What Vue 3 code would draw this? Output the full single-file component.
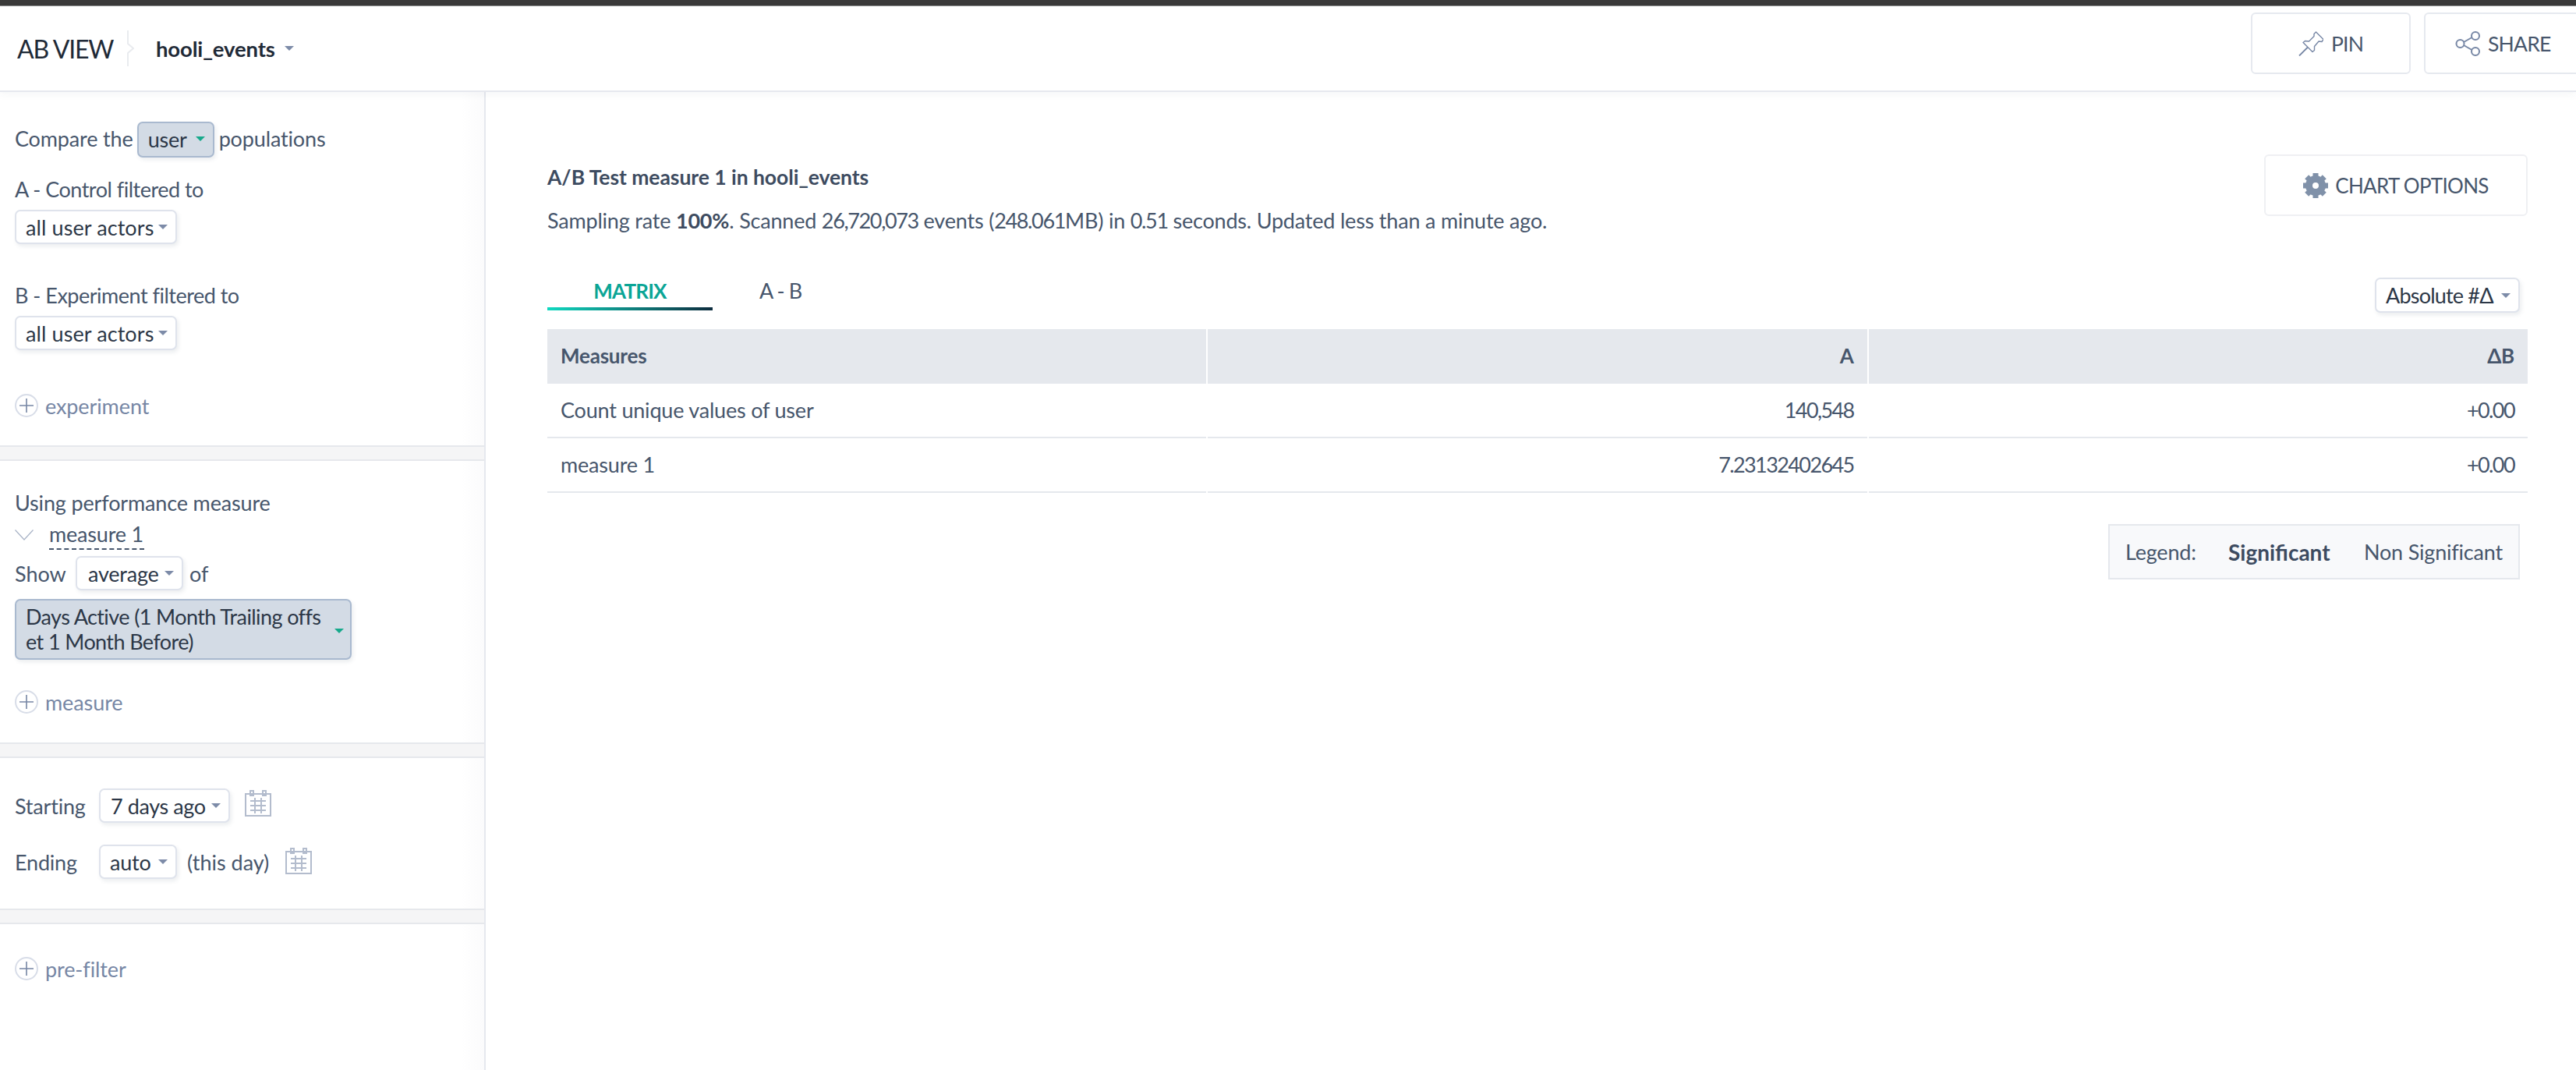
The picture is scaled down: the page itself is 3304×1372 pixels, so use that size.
<script setup>
const rows = [
  { name: 'Count unique values of user', a: '140,548', b: '+0.00' },
  { name: 'measure 1', a: '7.23132402645', b: '+0.00' }
]
const teeth = [0, 45, 90, 135, 180, 225, 270, 315]
</script>

<template>
  <div class="page">
    <div class="topline"></div>
    <header class="header">
      <div class="brand">AB VIEW</div>
      <svg class="crumb" width="9" height="46" viewBox="0 0 9 46"><path d="M1 0V17L8 23L1 29V46" fill="none" stroke="#e9ebef" stroke-width="2"/></svg>
      <div class="source">hooli_events<i class="caret"></i></div>
      <div class="head-actions">
        <button class="head-btn">
          <svg width="32" height="32" viewBox="0 0 32 32" fill="none" stroke="#7787a5" stroke-width="1.4" stroke-linejoin="round"><path d="M22.5 1L32 10.5L30 13.5L26 13L20.5 19.5L20.5 24.5L18 26.5L6 14.5L8.5 12.5L13.5 13L20 6.5L20 3.5Z"/><path d="M12 20.5L1 31.5" stroke-width="1.8"/></svg>
          <span>PIN</span>
        </button>
        <button class="head-btn share">
          <svg width="32" height="32" viewBox="0 0 32 32" fill="none" stroke="#7787a5" stroke-width="2"><circle cx="6.5" cy="16" r="5"/><circle cx="26" cy="6" r="5"/><circle cx="26" cy="26" r="5"/><path d="M11 14L21.5 8M11 18L21.5 24"/></svg>
          <span>SHARE</span>
        </button>
      </div>
    </header>

    <div class="body">
      <aside class="side">
        <section class="sec sec1">
          <div class="row compare">
            <span>Compare the</span>
            <div class="dd active user-dd">user<i class="caret green"></i></div>
            <span>populations</span>
          </div>
          <div class="label a-label">A - Control filtered to</div>
          <div class="row under"><div class="dd wide-dd">all user actors<i class="caret"></i></div></div>
          <div class="label b-label">B - Experiment filtered to</div>
          <div class="row under"><div class="dd wide-dd">all user actors<i class="caret"></i></div></div>
          <div class="add exp">
            <svg class="plus" width="30" height="30" viewBox="0 0 30 30" fill="none"><circle cx="15" cy="15" r="14" stroke="#d8dde8" stroke-width="2"/><path d="M15 6V24M6 15H24" stroke="#7787a5" stroke-width="1.6"/></svg>
            <span>experiment</span>
          </div>
        </section>
        <div class="divider"></div>

        <section class="sec sec2">
          <div class="label perf">Using performance measure</div>
          <div class="measure-row">
            <svg width="24" height="14" viewBox="0 0 24 14" fill="none"><path d="M0.5 0.5L12 13L23.5 0.5" stroke="#a9b3c6" stroke-width="1.2"/></svg>
            <span class="measure-name">measure 1</span>
          </div>
          <div class="row show-row">
            <span>Show</span>
            <div class="dd avg-dd">average<i class="caret"></i></div>
            <span>of</span>
          </div>
          <div class="dd active days-dd">
            <span class="days-text">Days Active (1 Month Trailing offs<br>et 1 Month Before)</span>
            <i class="caret green"></i>
          </div>
          <div class="add meas">
            <svg class="plus" width="30" height="30" viewBox="0 0 30 30" fill="none"><circle cx="15" cy="15" r="14" stroke="#d8dde8" stroke-width="2"/><path d="M15 6V24M6 15H24" stroke="#7787a5" stroke-width="1.6"/></svg>
            <span>measure</span>
          </div>
        </section>
        <div class="divider"></div>

        <section class="sec sec3">
          <div class="row date-row">
            <span class="date-label">Starting</span>
            <div class="dd start-dd">7 days ago<i class="caret"></i></div>
            <svg class="cal" width="34" height="34" viewBox="0 0 34 34" fill="none" stroke="#b3bccd" stroke-width="2"><rect x="1" y="5" width="32" height="28"/><rect x="7" y="1" width="4" height="6"/><rect x="23" y="1" width="4" height="6"/><path d="M7 14H27M7 20H27M7 26H27M13 10V30M21 10V30"/></svg>
          </div>
          <div class="row date-row second">
            <span class="date-label">Ending</span>
            <div class="dd end-dd">auto<i class="caret"></i></div>
            <span class="this-day">(this day)</span>
            <svg class="cal" width="34" height="34" viewBox="0 0 34 34" fill="none" stroke="#b3bccd" stroke-width="2"><rect x="1" y="5" width="32" height="28"/><rect x="7" y="1" width="4" height="6"/><rect x="23" y="1" width="4" height="6"/><path d="M7 14H27M7 20H27M7 26H27M13 10V30M21 10V30"/></svg>
          </div>
        </section>
        <div class="divider"></div>

        <section class="sec sec4">
          <div class="add">
            <svg class="plus" width="30" height="30" viewBox="0 0 30 30" fill="none"><circle cx="15" cy="15" r="14" stroke="#d8dde8" stroke-width="2"/><path d="M15 6V24M6 15H24" stroke="#7787a5" stroke-width="1.6"/></svg>
            <span>pre-filter</span>
          </div>
        </section>
      </aside>

      <main class="main">
        <div class="title-row">
          <div class="titles">
            <div class="title">A/B Test measure 1 in hooli_events</div>
            <div class="sub">Sampling rate <b>100%</b>. Scanned <span class="num">26,720,073</span> events (<span class="num">248.061</span>MB) in <span class="num">0.51</span> seconds. Updated less than a minute ago.</div>
          </div>
          <button class="chart-btn">
            <svg width="32" height="32" viewBox="0 0 32 32">
              <rect v-for="t in teeth" :key="t" x="12.5" y="0" width="7" height="7" fill="#8091a9" :transform="`rotate(${t} 16 16)`"/>
              <circle cx="16" cy="16" r="8.5" fill="none" stroke="#8091a9" stroke-width="9"/>
            </svg>
            <span>CHART OPTIONS</span>
          </button>
        </div>

        <div class="tabs-row">
          <div class="tabs">
            <div class="tab on">MATRIX</div>
            <div class="tab">A - B</div>
          </div>
          <div class="dd abs-dd">Absolute #Δ<i class="caret"></i></div>
        </div>

        <div class="table">
          <div class="th">Measures</div>
          <div class="th right">A</div>
          <div class="th right">ΔB</div>
          <template v-for="r in rows" :key="r.name">
            <div class="td">{{ r.name }}</div>
            <div class="td right">{{ r.a }}</div>
            <div class="td right">{{ r.b }}</div>
          </template>
        </div>

        <div class="legend">
          <span class="lg-label">Legend:</span>
          <b class="lg-sig">Significant</b>
          <span class="lg-non">Non Significant</span>
        </div>
      </main>
    </div>
  </div>
</template>

<style>
html, body { margin: 0; background: #fff; overflow: hidden; }
</style>

<style scoped>
.page {
  width: 3304px;
  height: 1372px;
  overflow: hidden;
  display: flex;
  flex-direction: column;
  font-family: Lato, "Liberation Sans", sans-serif;
  font-size: 27px;
  color: #47566c;
  background: #fff;
}
.topline { height: 7px; background: #3a3a3a; border-bottom: 1px solid #8a8a8a; flex: none; }
.header {
  height: 110px;
  flex: none;
  box-sizing: border-box;
  border-bottom: 2px solid #e6e8ee;
  box-shadow: 0 3px 10px rgba(60, 70, 90, 0.05);
  display: flex;
  align-items: center;
  position: relative;
  padding-left: 22px;
}
.brand { font-size: 32px; color: #1f2a37; width: 141px; letter-spacing: -1.2px; }
.crumb { flex: none; }
.source { margin-left: 28px; font-weight: 700; color: #1f2a37; font-size: 27.5px; display: flex; align-items: center; letter-spacing: -0.15px; }
.caret {
  display: inline-block;
  width: 0;
  height: 0;
  border-left: 6px solid transparent;
  border-right: 6px solid transparent;
  border-top: 6px solid #7d8ba8;
  margin-left: 12px;
  flex: none;
}
.caret.green { border-top-color: #16a98b; }
.head-actions { margin-left: auto; margin-right: -10px; display: flex; gap: 17px; margin-bottom: 21px; align-self: flex-end; }
.head-btn {
  width: 205px;
  height: 79px;
  box-sizing: border-box;
  background: #fff;
  border: 2px solid #e6e9ef;
  border-radius: 6px;
  font: inherit;
  font-size: 26.5px;
  color: #47566c;
  display: flex;
  align-items: center;
  justify-content: center;
  gap: 10px;
  padding: 0;
  letter-spacing: -0.8px;
}
.head-btn.share { justify-content: flex-start; padding-left: 38px; }
.body { flex: 1; display: flex; min-height: 0; }
.side {
  width: 623px;
  box-sizing: border-box;
  flex: none;
  border-right: 2px solid #e6e8ee;
  background: linear-gradient(to left, #fbfbfc, #fff 30px);
}
.sec { padding-left: 19px; box-sizing: border-box; }
.sec1 { padding-top: 38px; height: 453px; }
.sec2 { padding-top: 36px; height: 361px; }
.sec3 { padding-top: 39px; height: 193px; }
.sec4 { padding-top: 42px; }
.divider { height: 20px; box-sizing: border-box; background: #f5f5f6; border-top: 2px solid #e6e8ec; border-bottom: 2px solid #e6e8ec; }
.row { display: flex; align-items: center; }
.label { height: 36px; line-height: 36px; white-space: nowrap; letter-spacing: -0.5px; }
.label.perf { letter-spacing: -0.15px; }
.a-label { margin-top: 23px; }
.b-label { margin-top: 48px; }
.under { margin-top: 8px; }
.dd {
  box-sizing: border-box;
  display: inline-flex;
  align-items: center;
  background: #fff;
  border: 2px solid #dfe3ec;
  border-radius: 7px;
  box-shadow: 2px 3px 5px rgba(70, 85, 110, 0.1);
  color: #2c3747;
  white-space: nowrap;
  height: 44px;
  padding: 0 10px 0 12px;
  letter-spacing: -0.2px;
}
.dd .caret { margin-left: auto; }
.dd.active { background: #d3dbe5; border-color: #a9b9cf; }
.compare > span { letter-spacing: -0.15px; padding-bottom: 3px; }
.user-dd { width: 99px; height: 46px; margin: 0 6px 0 5px; padding-left: 12px; padding-bottom: 2px; }
.wide-dd { width: 208px; letter-spacing: 0.1px; }
.add { display: flex; align-items: center; height: 30px; color: #7787a5; gap: 9px; letter-spacing: -0.1px; }
.plus { flex: none; }
.exp { margin-top: 56px; }
.meas { margin-top: 39px; }
.measure-row { height: 38px; margin-top: 4px; display: flex; align-items: center; }
.measure-name { margin-left: 20px; width: 122px; border-bottom: 2px dashed #47566c; height: 38px; line-height: 36px; box-sizing: border-box; white-space: nowrap; letter-spacing: -0.2px; }
.show-row { margin-top: 8px; }
.show-row > span:first-child { width: 78px; }
.avg-dd { width: 138px; padding-left: 14px; }
.show-row > span:last-child { margin-left: 8px; }
.days-dd {
  display: flex;
  width: 432px;
  height: 78px;
  margin-top: 11px;
  line-height: 32px;
  padding-right: 8px;
}
.days-text { letter-spacing: -0.6px; }
.days-dd .caret { margin-top: 4px; }
.date-row { height: 44px; }
.date-row.second { margin-top: 28px; }
.date-label { width: 108px; letter-spacing: -0.2px; }
.start-dd { width: 168px; padding-left: 13px; letter-spacing: -0.4px; }
.end-dd { width: 100px; }
.this-day { margin-left: 13px; width: 113px; white-space: nowrap; letter-spacing: 0; }
.start-dd + .cal { margin-left: 19px; margin-top: -6px; }
.this-day + .cal { margin-left: 13px; margin-top: -2px; }
.main {
  flex: 1;
  min-width: 0;
  box-sizing: border-box;
  padding: 80px 62px 0 79px;
  display: flex;
  flex-direction: column;
}
.title-row { display: flex; justify-content: space-between; align-items: flex-start; height: 103px; }
.titles { padding-top: 11px; }
.title { height: 36px; line-height: 36px; font-weight: 700; font-size: 26.5px; color: #3d4b60; letter-spacing: -0.05px; }
.sub { height: 36px; line-height: 36px; margin-top: 20px; white-space: nowrap; letter-spacing: -0.2px; }
.sub b { color: #3d4b60; }
.num { letter-spacing: -1.35px; }
.chart-btn {
  width: 338px;
  height: 79px;
  box-sizing: border-box;
  background: #fff;
  border: 2px solid #eff0f3;
  border-radius: 6px;
  font: inherit;
  font-size: 26px;
  color: #47566c;
  display: flex;
  align-items: center;
  justify-content: center;
  gap: 9px;
  padding: 0;
  letter-spacing: -0.7px;
}
.tabs-row { display: flex; justify-content: space-between; align-items: flex-start; margin-top: 55px; height: 45px; }
.tabs { display: flex; }
.tab {
  height: 42px;
  padding: 0 60px;
  line-height: 34px;
  box-sizing: border-box;
  position: relative;
  letter-spacing: -0.9px;
}
.tab.on { width: 212px; padding: 0; text-align: center; color: #0ba596; font-weight: 700; font-size: 26px; letter-spacing: -0.8px; }
.tab.on::after {
  content: "";
  position: absolute;
  left: 0;
  right: 0;
  bottom: 0;
  height: 4px;
  background: linear-gradient(to right, #0fd9c0, #0d2c3e);
}
.abs-dd { width: 186px; height: 45px; margin-right: 10px; padding-left: 12px; letter-spacing: -0.8px; }
.table {
  margin-top: 21px;
  display: grid;
  grid-template-columns: repeat(3, 1fr);
  column-gap: 2px;
}
.th {
  height: 70px;
  line-height: 68px;
  background: #e5e8ed;
  padding: 0 17px;
  font-weight: 700;
  font-size: 26px;
  color: #47566c;
  letter-spacing: -0.2px;
}
.td {
  height: 70px;
  line-height: 68px;
  box-sizing: border-box;
  border-bottom: 2px solid #e5e8ed;
  padding: 0 17px;
  letter-spacing: -0.2px;
}
.right { text-align: right; }
.td.right { letter-spacing: -1.6px; }
.legend {
  margin-top: 40px;
  align-self: flex-end;
  margin-right: 10px;
  width: 528px;
  height: 71px;
  box-sizing: border-box;
  background: #f8f9fb;
  border: 2px solid #e5e8ed;
  display: flex;
  align-items: center;
  padding-left: 20px;
  white-space: nowrap;
  letter-spacing: -0.2px;
}
.lg-label { width: 132px; }
.lg-sig { width: 174px; color: #3d4b60; font-size: 28px; letter-spacing: 0; }
</style>
